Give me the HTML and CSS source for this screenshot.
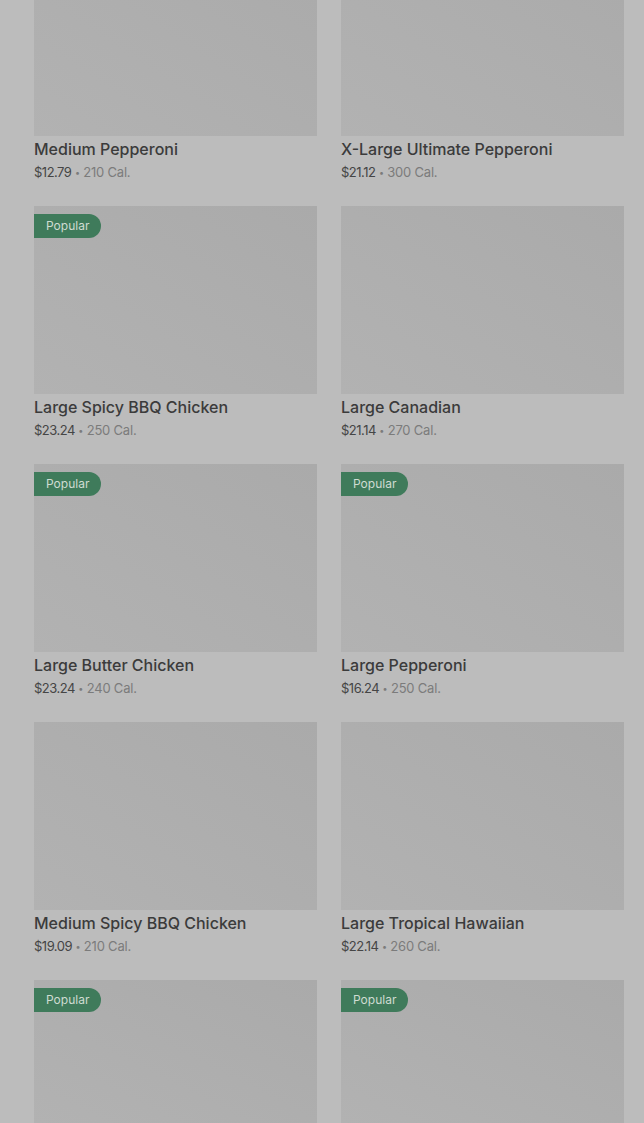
FILE: index.html
```html
<!DOCTYPE html>
<html lang="en">
<head>
  <meta charset="UTF-8" />
  <meta name="viewport" content="width=device-width, initial-scale=1.0"/>
  <title>Pizza Menu</title>
  <link rel="stylesheet" href="styles.css">
</head>
<body>
  <div class="menu-grid">
    <div class="item">
      <div class="item-img"></div>
      <div class="item-info">
        <div class="item-name">Medium Pepperoni</div>
        <div class="item-meta"><span class="price">$12.79</span> <span class="dot">•</span> 210 Cal.</div>
      </div>
    </div>
    <div class="item">
      <div class="item-img"></div>
      <div class="item-info">
        <div class="item-name">X-Large Ultimate Pepperoni</div>
        <div class="item-meta"><span class="price">$21.12</span> <span class="dot">•</span> 300 Cal.</div>
      </div>
    </div>

    <div class="item">
      <div class="item-img"><span class="badge">Popular</span></div>
      <div class="item-info">
        <div class="item-name">Large Spicy BBQ Chicken</div>
        <div class="item-meta"><span class="price">$23.24</span> <span class="dot">•</span> 250 Cal.</div>
      </div>
    </div>
    <div class="item">
      <div class="item-img"></div>
      <div class="item-info">
        <div class="item-name">Large Canadian</div>
        <div class="item-meta"><span class="price">$21.14</span> <span class="dot">•</span> 270 Cal.</div>
      </div>
    </div>

    <div class="item">
      <div class="item-img"><span class="badge">Popular</span></div>
      <div class="item-info">
        <div class="item-name">Large Butter Chicken</div>
        <div class="item-meta"><span class="price">$23.24</span> <span class="dot">•</span> 240 Cal.</div>
      </div>
    </div>
    <div class="item">
      <div class="item-img"><span class="badge">Popular</span></div>
      <div class="item-info">
        <div class="item-name">Large Pepperoni</div>
        <div class="item-meta"><span class="price">$16.24</span> <span class="dot">•</span> 250 Cal.</div>
      </div>
    </div>

    <div class="item">
      <div class="item-img"></div>
      <div class="item-info">
        <div class="item-name">Medium Spicy BBQ Chicken</div>
        <div class="item-meta"><span class="price">$19.09</span> <span class="dot">•</span> 210 Cal.</div>
      </div>
    </div>
    <div class="item">
      <div class="item-img"></div>
      <div class="item-info">
        <div class="item-name">Large Tropical Hawaiian</div>
        <div class="item-meta"><span class="price">$22.14</span> <span class="dot">•</span> 260 Cal.</div>
      </div>
    </div>

    <div class="item">
      <div class="item-img item-img-last"><span class="badge">Popular</span></div>
    </div>
    <div class="item">
      <div class="item-img item-img-last"><span class="badge">Popular</span></div>
    </div>
  </div>
</body>
</html>
```

FILE: styles.css
```css
body {
  margin: 0;
  padding: 0;
  background-color: #bcbcbc;
  font-family: Inter, 'Noto Sans', sans-serif;
  height: 1123px;
  overflow: hidden;
}

.menu-grid {
  display: grid;
  grid-template-columns: 283px 283px;
  column-gap: 24px;
  row-gap: 25px;
  padding: 0 20px 0 34px;
  margin-top: -52px;
}

.item-img {
  position: relative;
  height: 188px;
  background: linear-gradient(to top right, #b2b2b2, #aaaaaa);
}

.item-img-last {
  height: 143px;
}

.badge {
  position: absolute;
  top: 8px;
  left: 0;
  height: 24px;
  line-height: 24px;
  padding: 0 12px;
  background-color: #3f7b5b;
  color: #cfdcd2;
  font-size: 12px;
  border-radius: 0 12px 12px 0;
}

.item-info {
  padding-top: 3px;
}

.item-name {
  font-size: 16px;
  font-weight: 500;
  line-height: 20px;
  color: #3b3b3b;
}

.item-meta {
  margin-top: 4px;
  height: 18px;
  font-size: 13px;
  line-height: 18px;
  color: #7b7b7b;
  letter-spacing: -0.2px;
}

.price {
  color: #454545;
  letter-spacing: -0.5px;
}

.dot {
  font-size: 9px;
  line-height: 0;
  position: relative;
  top: -1px;
}
```
